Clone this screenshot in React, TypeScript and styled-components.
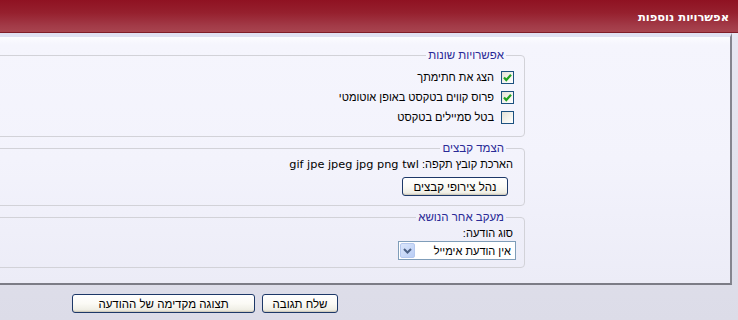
import React from "react";
import styled, { createGlobalStyle } from "styled-components";

const Global = createGlobalStyle`
  html, body { margin: 0; padding: 0; background: #dcdce8; }
  body { font-family: "Liberation Sans", "DejaVu Sans", sans-serif; font-size: 11px; color: #000; }
`;

const Page = styled.div`
  direction: rtl;
  width: 738px;
  height: 320px;
  overflow: hidden;
  background: linear-gradient(#e9e9f3, #dcdce8);
  display: flex;
  flex-direction: column;
`;

const Header = styled.div`
  height: 32px;
  flex: none;
  border-bottom: 1px solid #7f1c28;
  background: linear-gradient(#8f1222 0%, #96202e 40%, #a23a47 80%, #a8444f 100%);
  display: flex;
  align-items: center;
  padding-right: 9px;
`;

const Title = styled.div`
  color: #fff;
  font-family: "DejaVu Sans", sans-serif;
  font-weight: bold;
  font-size: 11.5px;
  margin-top: 1px;
`;

const Panel = styled.div`
  flex: none;
  margin-left: -40px;
  margin-right: 6px;
  border-top: 4px solid #dfe0f2;
  border-right: 2px solid #85858f;
  border-bottom: 2px solid #7c7c86;
  background: linear-gradient(#fbfbff 0px, #f5f5fd 8px, #f3f3fc 50%, #ececf7 100%);
  display: grid;
  grid-template-columns: 205px 1fr;
  padding: 11px 0 15px 0;
  height: 220px;
  box-sizing: content-box;
`;

const LabelCol = styled.div``;

const Fields = styled.div`
  display: flex;
  flex-direction: column;
  gap: 4px;
`;

const Fieldset = styled.fieldset<{ $pb: number }>`
  margin: 0;
  border: 1px solid #d2d2d8;
  border-radius: 4px;
  padding: 0 8px ${(p) => p.$pb}px 0;
  min-width: 0;
`;

const Legend = styled.legend`
  color: #2a2a96;
  font-size: 11.5px;
  padding: 0 2px;
  margin-right: 10px;
  line-height: 14px;
`;

const CheckRow = styled.label<{ $first?: boolean }>`
  display: flex;
  align-items: center;
  gap: 7px;
  height: 20px;
  padding-right: 2px;
  margin-top: ${(p) => (p.$first ? "5px" : "0")};
`;

const Box = styled.span`
  width: 11px;
  height: 11px;
  border: 1px solid #1c5180;
  background: linear-gradient(135deg, #e3e1d6 0%, #f6f5ef 60%, #ffffff 100%);
  display: inline-flex;
  align-items: center;
  justify-content: center;
  flex: none;
`;

const Text = styled.div<{ $mt: number }>`
  height: 14px;
  line-height: 14px;
  padding-right: 3px;
  margin-top: ${(p) => p.$mt}px;
  white-space: nowrap;
`;

const Latin = styled.span`
  font-family: "DejaVu Sans", sans-serif;
  font-size: 11.3px;
  line-height: 1;
`;

const Button = styled.button<{ $w: number; $mt?: number; $mr?: number }>`
  font-family: "Liberation Sans", "DejaVu Sans", sans-serif;
  font-size: 11.5px;
  color: #000;
  height: 19px;
  width: ${(p) => p.$w}px;
  margin-top: ${(p) => p.$mt ?? 0}px;
  margin-right: ${(p) => p.$mr ?? 0}px;
  padding: 0;
  border: 1px solid #1d3868;
  border-radius: 3px;
  background: linear-gradient(#ffffff 0%, #fbfaf5 50%, #f0efe6 85%, #d9d5c8 100%);
  box-shadow: inset 0 -1px 0 #d0ccbe;
  line-height: 16px;
  cursor: pointer;
`;

const Select = styled.div`
  width: 115px;
  height: 17px;
  margin-top: 1px;
  border: 1px solid #7f9db9;
  background: #fff;
  display: flex;
  align-items: center;
  justify-content: space-between;
  padding: 0 0 0 1px;
`;

const SelectText = styled.span`
  padding-right: 4px;
`;

const Arrow = styled.span`
  width: 15px;
  height: 15px;
  border-radius: 2px;
  background: linear-gradient(135deg, #dbe6fb, #b9cdf5);
  border: 1px solid #b5c8ee;
  box-sizing: border-box;
  display: inline-flex;
  align-items: center;
  justify-content: center;
`;

const Footer = styled.div`
  flex: 1;
  display: flex;
  gap: 7px;
  padding: 9px 400px 0 0;
  align-items: flex-start;
`;

const Check = () => (
  <svg width="9" height="9" viewBox="0 0 9 9">
    <path d="M1 4.5 L3.3 7 L8 1.8" fill="none" stroke="#21a121" strokeWidth="2.2" />
  </svg>
);

const Chevron = () => (
  <svg width="9" height="6" viewBox="0 0 9 6">
    <path d="M1 1 L4.5 4.5 L8 1" fill="none" stroke="#4d6185" strokeWidth="2" />
  </svg>
);

export default function App() {
  return (
    <Page>
      <Global />
      <Header>
        <Title>אפשרויות נוספות</Title>
      </Header>
      <Panel>
        <LabelCol />
        <Fields>
          <Fieldset $pb={9}>
            <Legend>אפשרויות שונות</Legend>
            <CheckRow $first>
              <Box><Check /></Box>
              <span>הצג את חתימתך</span>
            </CheckRow>
            <CheckRow>
              <Box><Check /></Box>
              <span>פרוס קווים בטקסט באופן אוטומטי</span>
            </CheckRow>
            <CheckRow>
              <Box />
              <span>בטל סמיילים בטקסט</span>
            </CheckRow>
          </Fieldset>
          <Fieldset $pb={9}>
            <Legend>הצמד קבצים</Legend>
            <Text $mt={2}>הארכת קובץ תקפה: <Latin>gif jpe jpeg jpg png twl</Latin></Text>
            <Button $w={106} $mt={6} $mr={8}>נהל צירופי קבצים</Button>
          </Fieldset>
          <Fieldset $pb={7}>
            <Legend>מעקב אחר הנושא</Legend>
            <Text $mt={2}>סוג הודעה:</Text>
            <Select>
              <SelectText>אין הודעת אימייל</SelectText>
              <Arrow><Chevron /></Arrow>
            </Select>
          </Fieldset>
        </Fields>
      </Panel>
      <Footer>
        <Button $w={76}>שלח תגובה</Button>
        <Button $w={183}>תצוגה מקדימה של ההודעה</Button>
      </Footer>
    </Page>
  );
}
